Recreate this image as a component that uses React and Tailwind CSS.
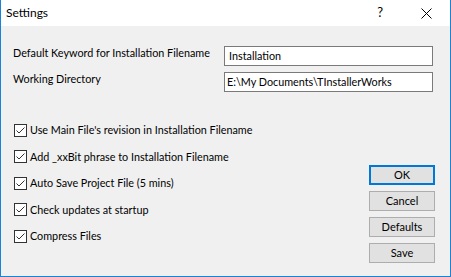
export default function App() {
  const font = { fontFamily: 'Lato, "Noto Sans", sans-serif' };
  const checks = [
    "Use Main File's revision in Installation Filename",
    "Add _xxBit phrase to Installation Filename",
    "Auto Save Project File (5 mins)",
    "Check updates at startup",
    "Compress Files",
  ];
  const Check = () => (
    <span className="w-[13px] h-[13px] border border-[#333333] bg-white flex items-center justify-center shrink-0">
      <svg width="11" height="11" viewBox="0 0 11 11">
        <path d="M1.5 5.5 L4 8 L9.5 2.5" fill="none" stroke="#333333" strokeWidth="1" />
      </svg>
    </span>
  );
  const Btn = ({ children, primary }) => (
    <div
      className={
        "w-[66px] h-[20px] flex items-center justify-center bg-[#e1e1e1] text-[11px] text-black " +
        (primary ? "border-2 border-[#0078d7]" : "border border-[#adadad]")
      }
    >
      {children}
    </div>
  );
  return (
    <div className="w-[451px] h-[277px] bg-[#f0f0f0] border-l border-r border-b border-[#1883d7] flex flex-col text-black whitespace-nowrap" style={font}>
      <div className="h-[26px] bg-white flex items-center shrink-0">
        <span className="ml-[5px] text-[12px]">Settings</span>
        <span className="ml-auto mr-[38px] text-[13px]">?</span>
        <svg width="11" height="11" viewBox="0 0 11 11" className="mr-[18px]">
          <path d="M0.5 0.5 L10.5 10.5 M10.5 0.5 L0.5 10.5" stroke="#000" strokeWidth="1" />
        </svg>
      </div>
      <div className="flex flex-col pl-[12px] pt-[20px] text-[10.8px]">
        <div className="flex items-start h-[20px]">
          <span className="w-[211px] mt-[-1px]">Default Keyword for Installation Filename</span>
          <div className="w-[209px] h-[20px] bg-white border border-[#7a7a7a] flex items-center pl-[4px]">Installation</div>
        </div>
        <div className="flex items-start h-[20px] mt-[6px]">
          <span className="w-[211px] mt-[-1px]">Working Directory</span>
          <div className="w-[209px] h-[20px] bg-white border border-[#7a7a7a] flex items-center pl-[2px]">E:\My Documents\TInstallerWorks</div>
        </div>
        <div className="flex mt-[25px]">
          <div className="flex flex-col w-[356px]">
            {checks.map((c) => (
              <div key={c} className="h-[26.5px] flex items-center pl-[1px]">
                <Check />
                <span className="ml-[3px]">{c}</span>
              </div>
            ))}
          </div>
          <div className="flex flex-col gap-[6px] mt-[48px]">
            <Btn primary>OK</Btn>
            <Btn>Cancel</Btn>
            <Btn>Defaults</Btn>
            <Btn>Save</Btn>
          </div>
        </div>
      </div>
    </div>
  );
}
